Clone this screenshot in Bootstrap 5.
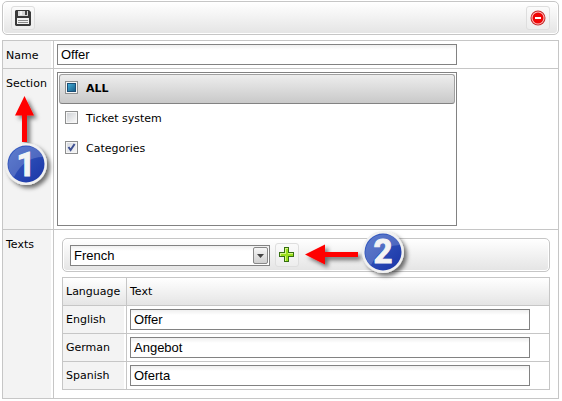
<!DOCTYPE html>
<html lang="en">
<head>
<meta charset="utf-8">
<meta name="viewport" content="width=device-width, initial-scale=1">
<title>Edit category</title>
<link href="https://cdn.jsdelivr.net/npm/bootstrap@5.3.0/dist/css/bootstrap.min.css" rel="stylesheet">
<style>
body{font:11px/16px Verdana,"DejaVu Sans",sans-serif;color:#000;background:#fff;padding:1px 3px 2px 2px}
.bar{height:34px;margin-bottom:5px;border:1px solid #c6c6c6;border-radius:5px;background:linear-gradient(#fff,#e4e4e4);box-shadow:inset 0 0 0 1px #fff}
.bar-add{padding-left:7px;gap:5px}
.tool{width:24px;height:24px;padding:0;border:1px solid #dedede;border-radius:3px;background:linear-gradient(#fafafa,#ededed)}
.sheet{border:1px solid #c6c6c6}
.line + .line{border-top:1px solid #c6c6c6}
.side{width:51px;flex:none;padding:7px 0 4px 3px;background:#f3f3f3;border-right:1px solid #c6c6c6;box-shadow:inset -2px 0 #fff}
.body-cell{padding:3px}
.field,.picker{font:13px/17px "Liberation Sans",Arial,sans-serif;color:#000;height:21px;border:1px solid #828282;border-radius:0;padding:0 3px;background:linear-gradient(#efefef,#fff 5px);width:400px;max-width:100%;display:block}
.picker{appearance:none;width:200px}
.drop{right:2px;top:2px;pointer-events:none}
.list{width:400px;max-width:100%;height:154px;border:1px solid #828282;padding:1px}
.item{height:30px;padding:0 6px;gap:8px}
.item-all{padding:0 5px;border:1px solid #a0a0a0;border-bottom-color:#828282;border-radius:3px;background:linear-gradient(#ededed,#c9c9c9);font-weight:bold}
.tick{appearance:none;width:13px;height:13px;margin:0 0 3px;border:1px solid #8e8f8f;box-shadow:inset 0 0 0 1px #f6f6f6;background:linear-gradient(135deg,#cfd2d6,#f8f8f8) center/9px 9px no-repeat #f6f6f6}
.tick:checked{background:url("data:image/svg+xml,%3Csvg xmlns='http://www.w3.org/2000/svg' viewBox='0 0 11 11'%3E%3Cpath d='M2.5 5L4.6 8L8.6 2' fill='none' stroke='%233d4f91' stroke-width='2'/%3E%3C/svg%3E") center/11px 11px no-repeat,linear-gradient(135deg,#d3d7de,#f8f8f8)}
.tick:indeterminate{background:linear-gradient(135deg,#48b5e0,#12557f) center/9px 9px no-repeat #f6f6f6;box-shadow:inset 0 0 0 1px #f6f6f6,inset 0 0 0 2px #1b4f76}
.texts{padding:8px}
.langs{border:1px solid #c6c6c6;width:100%;border-collapse:collapse}
.langs th,.langs td{height:28px;padding:0 3px;border:1px solid #c6c6c6;font-weight:normal;vertical-align:middle}
.langs thead tr{background:linear-gradient(#fff,#e4e4e4)}
.langs tbody th{background:#f3f3f3;box-shadow:inset -2px 0 #fff}
.langs th:first-child{width:64px}
.mark-one{left:0;top:24px}
.mark-two{left:240px;top:-10px}
.digit{font:bold 33px Roboto,Arial,sans-serif;fill:#f4f4f4;stroke:#f4f4f4;stroke-width:1px}
</style>
<script src="https://cdn.jsdelivr.net/npm/bootstrap@5.3.0/dist/js/bootstrap.bundle.min.js"></script>
</head>
<body>
<div class="bar d-flex justify-content-between align-items-center px-1">
  <button class="tool d-flex align-items-center justify-content-center ms-1" type="button" aria-label="Save">
    <svg width="16" height="16" viewBox="0 0 16 16"><path d="M1 0h13l2 2v13l-1 1H1l-1-1V1z" fill="#3a3a3a"/><path d="M3 1h10v5H3z" fill="#d9d9d9"/><path d="M5 1h2v4H5z" fill="#f5f5f5"/><path d="M10 1h2v4h-2z" fill="#444"/><path d="M2 8h12v6H2z" fill="#f2f2f2"/><path d="M3 10.500h10M3 12.500h10" stroke="#8a8a8a"/></svg>
  </button>
  <button class="tool d-flex align-items-center justify-content-center me-1" type="button" aria-label="Cancel">
    <svg width="16" height="16" viewBox="0 0 16 16"><circle cx="8" cy="8" r="7.500" fill="#c62a2a"/><circle cx="8" cy="8" r="6.500" fill="#ffc4c4"/><circle cx="8" cy="8" r="5.500" fill="#f00505"/><rect x="5" y="7" width="6" height="2" fill="#fff"/></svg>
  </button>
</div>
<main class="sheet">
  <div class="line d-flex">
    <label class="side" for="name">Name</label>
    <div class="body-cell flex-grow-1"><input class="field" id="name" type="text" value="Offer"></div>
  </div>
  <div class="line d-flex">
    <div class="side position-relative"><span id="section">Section</span>
      <svg class="mark-one position-absolute" width="54" height="102" viewBox="3 93 54 102" role="img" aria-label="Step 1">
        <defs>
          <linearGradient id="blue" x1="0" y1="0" x2="1" y2="1"><stop offset="0" stop-color="#3b62c4"/><stop offset="1" stop-color="#1a34a6"/></linearGradient>
          <filter id="soft" x="-30%" y="-30%" width="180%" height="180%"><feDropShadow dx="3" dy="3" stdDeviation="2" flood-color="#000" flood-opacity=".55"/></filter>
        </defs>
        <path filter="url(#soft)" d="M24.500 96L34 115.500H27V142H22V115.500H15z" fill="#f00"/>
        <circle filter="url(#soft)" cx="26" cy="164" r="21" fill="#f1f1f1"/>
        <circle cx="26" cy="164" r="18.500" fill="url(#blue)"/>
        <path d="M10 172A18 18 0 0 1 43 157Q24 157 14 177Q11 175 10 172" fill="#fff" opacity=".18"/>
        <text class="digit" x="26" y="176" text-anchor="middle">1</text>
      </svg>
    </div>
    <div class="body-cell flex-grow-1" role="group" aria-labelledby="section">
      <div class="list">
        <label class="item item-all d-flex align-items-center"><input class="tick" id="all" type="checkbox">ALL</label>
        <label class="item d-flex align-items-center"><input class="tick" type="checkbox">Ticket system</label>
        <label class="item d-flex align-items-center"><input class="tick" type="checkbox" checked>Categories</label>
      </div>
    </div>
  </div>
  <div class="line d-flex">
    <div class="side">Texts</div>
    <div class="texts flex-grow-1">
      <div class="bar bar-add position-relative d-flex align-items-center">
        <div class="position-relative">
          <select class="picker" aria-label="Language"><option>French</option></select>
          <svg class="drop position-absolute" width="15" height="17" viewBox="0 0 15 17"><defs><linearGradient id="g" x2="0" y2="1"><stop stop-color="#f7f7f7"/><stop offset="1" stop-color="#cfcfcf"/></linearGradient></defs><rect x=".5" y=".5" width="14" height="16" rx="1.500" fill="url(#g)" stroke="#888"/><path d="M4 7h7l-3.500 4z" fill="#444"/></svg>
        </div>
        <button class="tool d-flex align-items-center justify-content-center" type="button" aria-label="Add">
          <svg width="16" height="16" viewBox="0 0 16 16"><path d="M5 0h5v5h5v5h-5v5H5v-5H0V5h5z" fill="#357010"/><path d="M6 1h3v5h5v3H9v5H6V9H1V6h5z" fill="#d8f58a"/><path d="M7 2h2v5h5v2H9v5H7V9H2V7h5z" fill="#9be01c"/></svg>
        </button>
        <svg class="mark-two position-absolute" width="112" height="56" viewBox="303 229 112 56" role="img" aria-label="Step 2">
          <path filter="url(#soft)" d="M305 254.500L325 244.500V252H358V257H325V264.500z" fill="#f00"/>
          <circle filter="url(#soft)" cx="383" cy="252" r="21" fill="#f1f1f1"/>
          <circle cx="383" cy="252" r="18.500" fill="url(#blue)"/>
          <path d="M367 260A18 18 0 0 1 400 245Q381 245 371 265Q368 263 367 260" fill="#fff" opacity=".18"/>
          <text class="digit" x="383" y="263" text-anchor="middle">2</text>
        </svg>
      </div>
      <table class="langs">
        <thead><tr><th scope="col">Language</th><th scope="col">Text</th></tr></thead>
        <tbody>
          <tr><th scope="row"><label for="en">English</label></th><td><input class="field" id="en" type="text" value="Offer"></td></tr>
          <tr><th scope="row"><label for="de">German</label></th><td><input class="field" id="de" type="text" value="Angebot"></td></tr>
          <tr><th scope="row"><label for="es">Spanish</label></th><td><input class="field" id="es" type="text" value="Oferta"></td></tr>
        </tbody>
      </table>
    </div>
  </div>
</main>
<script>document.getElementById('all').indeterminate = true;</script>
</body>
</html>
